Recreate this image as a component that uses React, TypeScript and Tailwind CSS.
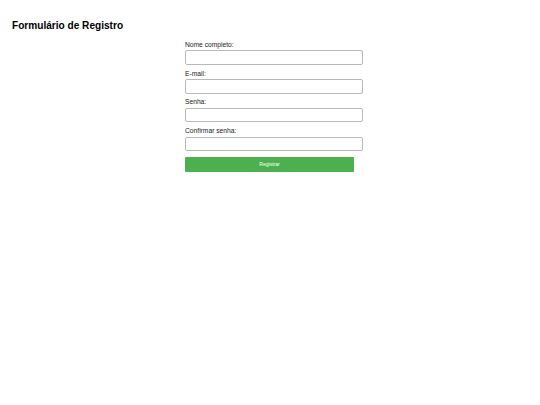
import React from "react";

const fields = [
  { label: "Nome completo:", type: "text" },
  { label: "E-mail:", type: "email" },
  { label: "Senha:", type: "password" },
  { label: "Confirmar senha:", type: "password" },
];

export default function App() {
  return (
    <div className="min-h-[405px] w-[540px] bg-white text-black" style={{ fontFamily: '"Liberation Sans", Arial, sans-serif' }}>
      <div className="pt-[19.5px] pl-[12px]">
        <h2 className="text-[10.1px] leading-[12px] font-bold m-0">Formulário de Registro</h2>
      </div>
      <form className="w-[170px] mx-auto mt-[9.4px]" onSubmit={(e) => e.preventDefault()}>
        {fields.map((f) => (
          <div key={f.label} className="mb-[4.8px]">
            <label className="block text-[6.7px] leading-[8px] text-[#222] mb-[1.5px]">{f.label}</label>
            <input
              type={f.type}
              className="block w-[177.5px] h-[14.5px] border border-[#b8b8b8] rounded-[2px] bg-white outline-none"
            />
          </div>
        ))}
        <button
          type="submit"
          className="block w-[169px] h-[15px] mt-[6.2px] bg-[#4caf50] text-white text-[5px] leading-[15px] text-center rounded-[1px]"
        >
          Registrar
        </button>
      </form>
    </div>
  );
}
